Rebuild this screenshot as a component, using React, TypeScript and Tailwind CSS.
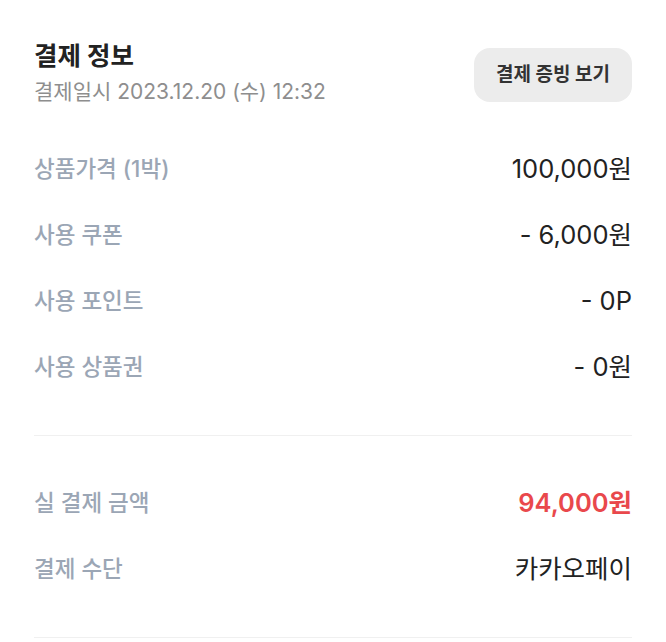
import React from "react";

const rows1 = [
  { label: "상품가격 (1박)", value: "100,000원" },
  { label: "사용 쿠폰", value: "- 6,000원" },
  { label: "사용 포인트", value: "- 0P" },
  { label: "사용 상품권", value: "- 0원" },
];

function Row({ label, value, red }: { label: string; value: string; red?: boolean }) {
  return (
    <div className="flex h-[66px] items-center justify-between">
      <span className="text-[22.5px] font-medium text-[#9ba6b5]">{label}</span>
      <span
        className={
          red
            ? "text-[25.5px] font-semibold text-[#e9484c]"
            : "text-[25.5px] font-normal text-[#222222]"
        }
      >
        {value}
      </span>
    </div>
  );
}

export default function App() {
  return (
    <div
      className="min-h-[642px] w-full bg-white px-[34px]"
      style={{ fontFamily: '"Inter", "Noto Sans CJK KR", "Noto Sans", sans-serif' }}
    >
      <div className="flex items-start justify-between pt-[40px]">
        <div className="flex flex-col">
          <div className="text-[25.5px] font-bold leading-[32px] text-[#222222]">결제 정보</div>
          <div className="mt-[6px] text-[21px] leading-[28px] text-[#8e8e8e]">
            결제일시 2023.12.20 (수) 12:32
          </div>
        </div>
        <button className="mt-[8px] flex h-[54px] w-[158px] items-center justify-center rounded-[16px] bg-[#ececec] text-[19px] font-bold text-[#333333]">
          결제 증빙 보기
        </button>
      </div>
      <div className="mt-[30px]">
        {rows1.map((r) => (
          <Row key={r.label} label={r.label} value={r.value} />
        ))}
      </div>
      <div className="mt-[35px] h-px bg-[#f0f0f0]" />
      <div className="mt-[34px]">
        <Row label="실 결제 금액" value="94,000원" red />
        <Row label="결제 수단" value="카카오페이" />
      </div>
      <div className="mt-[35px] h-px bg-[#f0f0f0]" />
    </div>
  );
}
